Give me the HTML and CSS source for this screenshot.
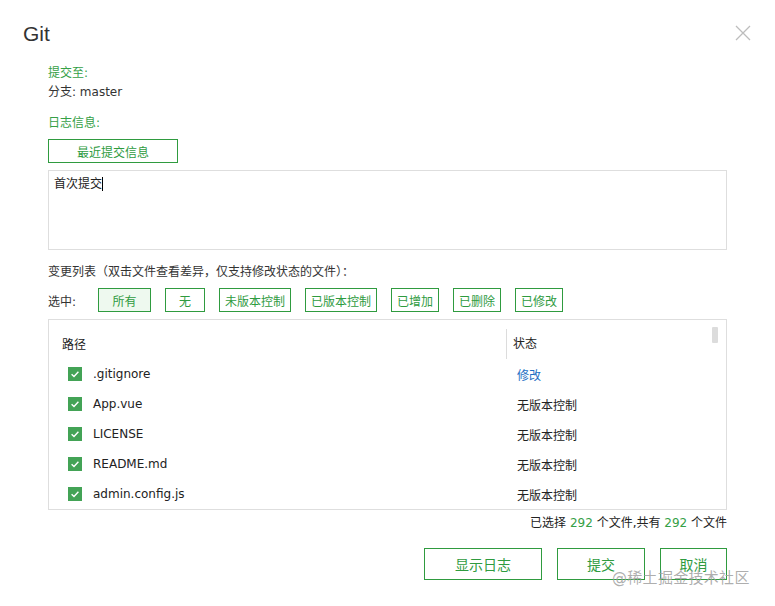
FILE: index.html
```html
<!DOCTYPE html>
<html lang="zh-CN">
<head>
<meta charset="utf-8">
<title>Git</title>
<link rel="stylesheet" href="styles.css">
</head>
<body>
<div class="dialog">
  <header class="dlg-head">
    <h1 class="dlg-title">Git</h1>
    <button class="dlg-close" aria-label="关闭">
      <svg width="16" height="16" viewBox="0 0 16 16"><path d="M1 1L15 15M15 1L1 15" stroke="#bdbdbd" stroke-width="1.3" fill="none"/></svg>
    </button>
  </header>
  <div class="dlg-body">
    <div class="line green">提交至:</div>
    <div class="line">分支: master</div>
    <div class="line green gap-top">日志信息:</div>
    <button class="btn btn-recent">最近提交信息</button>
    <div class="textarea">首次提交<span class="caret"></span></div>
    <div class="line list-label">变更列表（双击文件查看差异，仅支持修改状态的文件）：</div>
    <div class="filter-row">
      <span class="filter-label">选中:</span>
      <button class="btn btn-sm btn-active btn-all">所有</button>
      <button class="btn btn-sm btn-none">无</button>
      <button class="btn btn-sm">未版本控制</button>
      <button class="btn btn-sm">已版本控制</button>
      <button class="btn btn-sm">已增加</button>
      <button class="btn btn-sm">已删除</button>
      <button class="btn btn-sm">已修改</button>
    </div>
    <div class="table">
      <div class="thead">
        <div class="th th-path">路径</div>
        <div class="th th-status">状态</div>
      </div>
      <div class="tr">
        <div class="td td-path"><span class="check"><svg width="14" height="14" viewBox="0 0 14 14"><path d="M3.6 7.2L6 9.4L10.4 4.8" stroke="#fff" stroke-width="1.4" fill="none"/></svg></span>.gitignore</div>
        <div class="td td-status blue">修改</div>
      </div>
      <div class="tr">
        <div class="td td-path"><span class="check"><svg width="14" height="14" viewBox="0 0 14 14"><path d="M3.6 7.2L6 9.4L10.4 4.8" stroke="#fff" stroke-width="1.4" fill="none"/></svg></span>App.vue</div>
        <div class="td td-status">无版本控制</div>
      </div>
      <div class="tr">
        <div class="td td-path"><span class="check"><svg width="14" height="14" viewBox="0 0 14 14"><path d="M3.6 7.2L6 9.4L10.4 4.8" stroke="#fff" stroke-width="1.4" fill="none"/></svg></span>LICENSE</div>
        <div class="td td-status">无版本控制</div>
      </div>
      <div class="tr">
        <div class="td td-path"><span class="check"><svg width="14" height="14" viewBox="0 0 14 14"><path d="M3.6 7.2L6 9.4L10.4 4.8" stroke="#fff" stroke-width="1.4" fill="none"/></svg></span>README.md</div>
        <div class="td td-status">无版本控制</div>
      </div>
      <div class="tr">
        <div class="td td-path"><span class="check"><svg width="14" height="14" viewBox="0 0 14 14"><path d="M3.6 7.2L6 9.4L10.4 4.8" stroke="#fff" stroke-width="1.4" fill="none"/></svg></span>admin.config.js</div>
        <div class="td td-status">无版本控制</div>
      </div>
      <div class="scroll-thumb"></div>
    </div>
    <div class="summary">已选择 <span class="num">292</span> 个文件,共有 <span class="num">292</span> 个文件</div>
    <div class="actions">
      <button class="btn btn-lg btn-log">显示日志</button>
      <button class="btn btn-lg btn-submit">提交</button>
      <button class="btn btn-lg btn-cancel">取消</button>
    </div>
  </div>
  <div class="watermark">@稀土掘金技术社区</div>
</div>
</body>
</html>
```

FILE: styles.css
```css
* { box-sizing: border-box; }
html, body { margin: 0; padding: 0; background: #fff; }
body {
  font-family: "DejaVu Sans", "Noto Sans CJK SC", sans-serif;
  font-size: 12px;
  color: #333;
}
.dialog {
  position: relative;
  width: 775px;
  height: 606px;
  overflow: hidden;
}
.dlg-head {
  height: 64px;
  display: flex;
  align-items: center;
  justify-content: space-between;
  padding: 0 24px 0 23px;
}
.dlg-title {
  margin: 2px 0 0;
  font-family: "Liberation Sans", "Noto Sans CJK SC", sans-serif;
  font-size: 21px;
  font-weight: normal;
  color: #333;
  line-height: 1;
}
.dlg-close {
  border: 0;
  background: none;
  padding: 0;
  width: 16px;
  height: 16px;
  margin-top: 2px;
  display: flex;
}
.dlg-body {
  padding: 0 48px;
}
.line { line-height: 19px; }
.green { color: #35a046; }
.gap-top { margin-top: 12px; }
.btn {
  font-family: inherit;
  border: 1px solid #2f9b3f;
  background: #fff;
  color: #2f9b3f;
  padding: 0;
  cursor: pointer;
}
.btn-recent {
  display: block;
  margin-top: 6px;
  width: 130px;
  height: 24px;
  font-size: 12px;
}
.textarea {
  margin-top: 7px;
  height: 80px;
  border: 1px solid #dedede;
  padding: 6px 5px;
  line-height: 14px;
  font-size: 12px;
  color: #222;
}
.caret {
  display: inline-block;
  width: 1px;
  height: 14px;
  background: #000;
  vertical-align: top;
}
.list-label { margin-top: 13px; }
.filter-row {
  margin-top: 6px;
  height: 24px;
  display: flex;
  align-items: center;
  gap: 14px;
}
.filter-label { width: 36px; }
.btn-sm {
  height: 24px;
  padding: 0 5px;
  font-size: 12px;
  min-width: 47px;
}
.btn-all { width: 53px; }
.btn-none { min-width: 40px; width: 40px; }
.btn-active { background: #eef9ef; }
.table {
  position: relative;
  margin-top: 7px;
  height: 191px;
  border: 1px solid #dedede;
  padding-top: 8px;
}
.thead {
  display: flex;
  height: 31px;
  align-items: center;
  color: #222;
}
.th-path { width: 457px; padding-left: 13px; }
.th-status {
  padding-left: 6px;
  border-left: 1px solid #dcdcdc;
  height: 30px;
  line-height: 30px;
  margin-top: 1px;
}
.tr {
  display: flex;
  height: 30px;
  align-items: center;
  color: #222;
}
.td-path {
  width: 457px;
  padding-left: 19px;
  display: flex;
  align-items: center;
}
.check {
  width: 14px;
  height: 14px;
  background: #43a356;
  margin-right: 11px;
  display: flex;
}
.td-status { padding-left: 11px; }
.blue { color: #1d6ec3; }
.scroll-thumb {
  position: absolute;
  right: 8px;
  top: 7px;
  width: 6px;
  height: 16px;
  background: #dcdcdc;
  border-radius: 1px;
}
.summary {
  margin-top: 4px;
  line-height: 19px;
  text-align: right;
  color: #222;
}
.num { color: #35a046; }
.actions {
  margin-top: 15px;
  display: flex;
  justify-content: flex-end;
  gap: 15px;
}
.btn-lg {
  height: 32px;
  font-size: 14px;
}
.btn-log { width: 118px; }
.btn-submit { width: 88px; }
.btn-cancel { width: 67px; }
.watermark {
  position: absolute;
  left: 612px;
  top: 569px;
  font-size: 15px;
  line-height: 18px;
  color: rgba(160, 160, 160, 0.85);
  letter-spacing: 0.3px;
  white-space: nowrap;
}
```
